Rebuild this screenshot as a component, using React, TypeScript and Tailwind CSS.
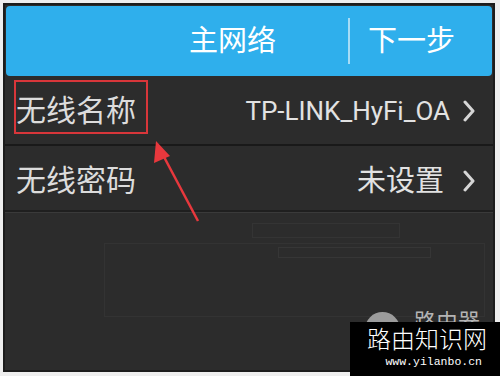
import React from 'react'

const cjk = '"Roboto", "Noto Sans CJK SC", sans-serif'

function Chevron() {
  return (
    <svg width="14" height="22" viewBox="0 0 14 22" className="shrink-0">
      <polyline points="3,2 11,11 3,20" fill="none" stroke="#d6d6d6" strokeWidth="3" strokeLinecap="round" strokeLinejoin="round" />
    </svg>
  )
}

function Row({ label, value, boxed, valueSize, gap }: { label: string; value: string; boxed?: boolean; valueSize: string; gap: string }) {
  return (
    <div className="flex items-center justify-between pl-[11px] pr-[17px]">
      <span className="relative text-[30px] leading-none text-[#dcdcdc]">
        {label}
        {boxed && (
          <span className="absolute -left-[2px] -top-[16px] w-[134px] h-[54px] border-2 border-[#d8363a]" />
        )}
      </span>
      <div className={`flex items-center ${gap}`}>
        <span className={`${valueSize} leading-none text-[#e2e2e2]`}>{value}</span>
        <Chevron />
      </div>
    </div>
  )
}

export default function App() {
  return (
    <div className="w-[500px] h-[376px] bg-[#eeeeee] p-[3px]" style={{ fontFamily: cjk }}>
      <div className="relative h-[369px] w-[492px] border-2 border-[#1c1c1c] bg-[#2c2c2c] overflow-hidden">
        {/* header */}
        <div className="mx-[1px] mt-[1px] h-[70px] rounded-[4px] bg-[#2fafec] flex items-center pl-[183px]">
          <span className="text-[29px] leading-none text-white">主网络</span>
          <span className="ml-[72px] w-[2px] h-[46px] bg-[#a6dcf6]" />
          <span className="ml-[18px] text-[29px] leading-none text-white">下一步</span>
        </div>

        {/* rows */}
        <div className="h-[70px] flex flex-col justify-center pt-[1px] border-b-2 border-[#191919]">
          <Row label="无线名称" value="TP-LINK_HyFi_OA" valueSize="text-[26px]" gap="gap-[12px]" boxed />
        </div>
        <div className="h-[66px] flex flex-col justify-center pt-[6px] border-b-2 border-[#1f1f1f] shadow-[0_1px_0_#3a3a3a]">
          <Row label="无线密码" value="未设置" valueSize="text-[29px]" gap="gap-[18px]" />
        </div>

        {/* faint ghost artifacts */}
        <div className="absolute left-[247px] top-[218px] w-[148px] h-[15px] border border-[#343434]" />
        <div className="absolute left-[99px] top-[238px] w-[381px] h-[74px] border border-[#333333]" />
        <div className="absolute left-[273px] top-[242px] w-[153px] h-[11px] border border-[#363636]" />

        {/* partially hidden logo, cut off by the watermark */}
        <div className="absolute left-[360px] top-[307px] w-[120px] h-[10px] overflow-hidden">
          <div className="w-[35px] h-[35px] rounded-full bg-[#9c9c9c]" />
        </div>
        <div className="absolute left-[409px] top-[306px] w-[75px] h-[11px] overflow-hidden">
          <span className="block text-[22px] leading-none text-[#b4b4b4]">路由器</span>
        </div>

        {/* red arrow */}
        <svg className="absolute left-0 top-0" width="492" height="369" viewBox="0 0 492 369">
          <line x1="193" y1="216" x2="158" y2="150" stroke="#e8383d" strokeWidth="2.5" />
          <polygon points="151,136 149,158 165,151" fill="#e8383d" />
        </svg>
      </div>

      {/* watermark */}
      <div className="absolute left-[350px] top-[322px] w-[150px] h-[54px] bg-black flex flex-col items-end pr-[13px] pt-[4px]">
        <span className="text-[24px] leading-none text-white" style={{ fontFamily: '"Noto Sans CJK SC", sans-serif', fontWeight: 300 }}>路由知识网</span>
        <span className="mt-[6px] mr-[5px] text-[11.5px] leading-none text-white" style={{ fontFamily: '"Liberation Mono", monospace' }}>www.yilanbo.cn</span>
      </div>
    </div>
  )
}
